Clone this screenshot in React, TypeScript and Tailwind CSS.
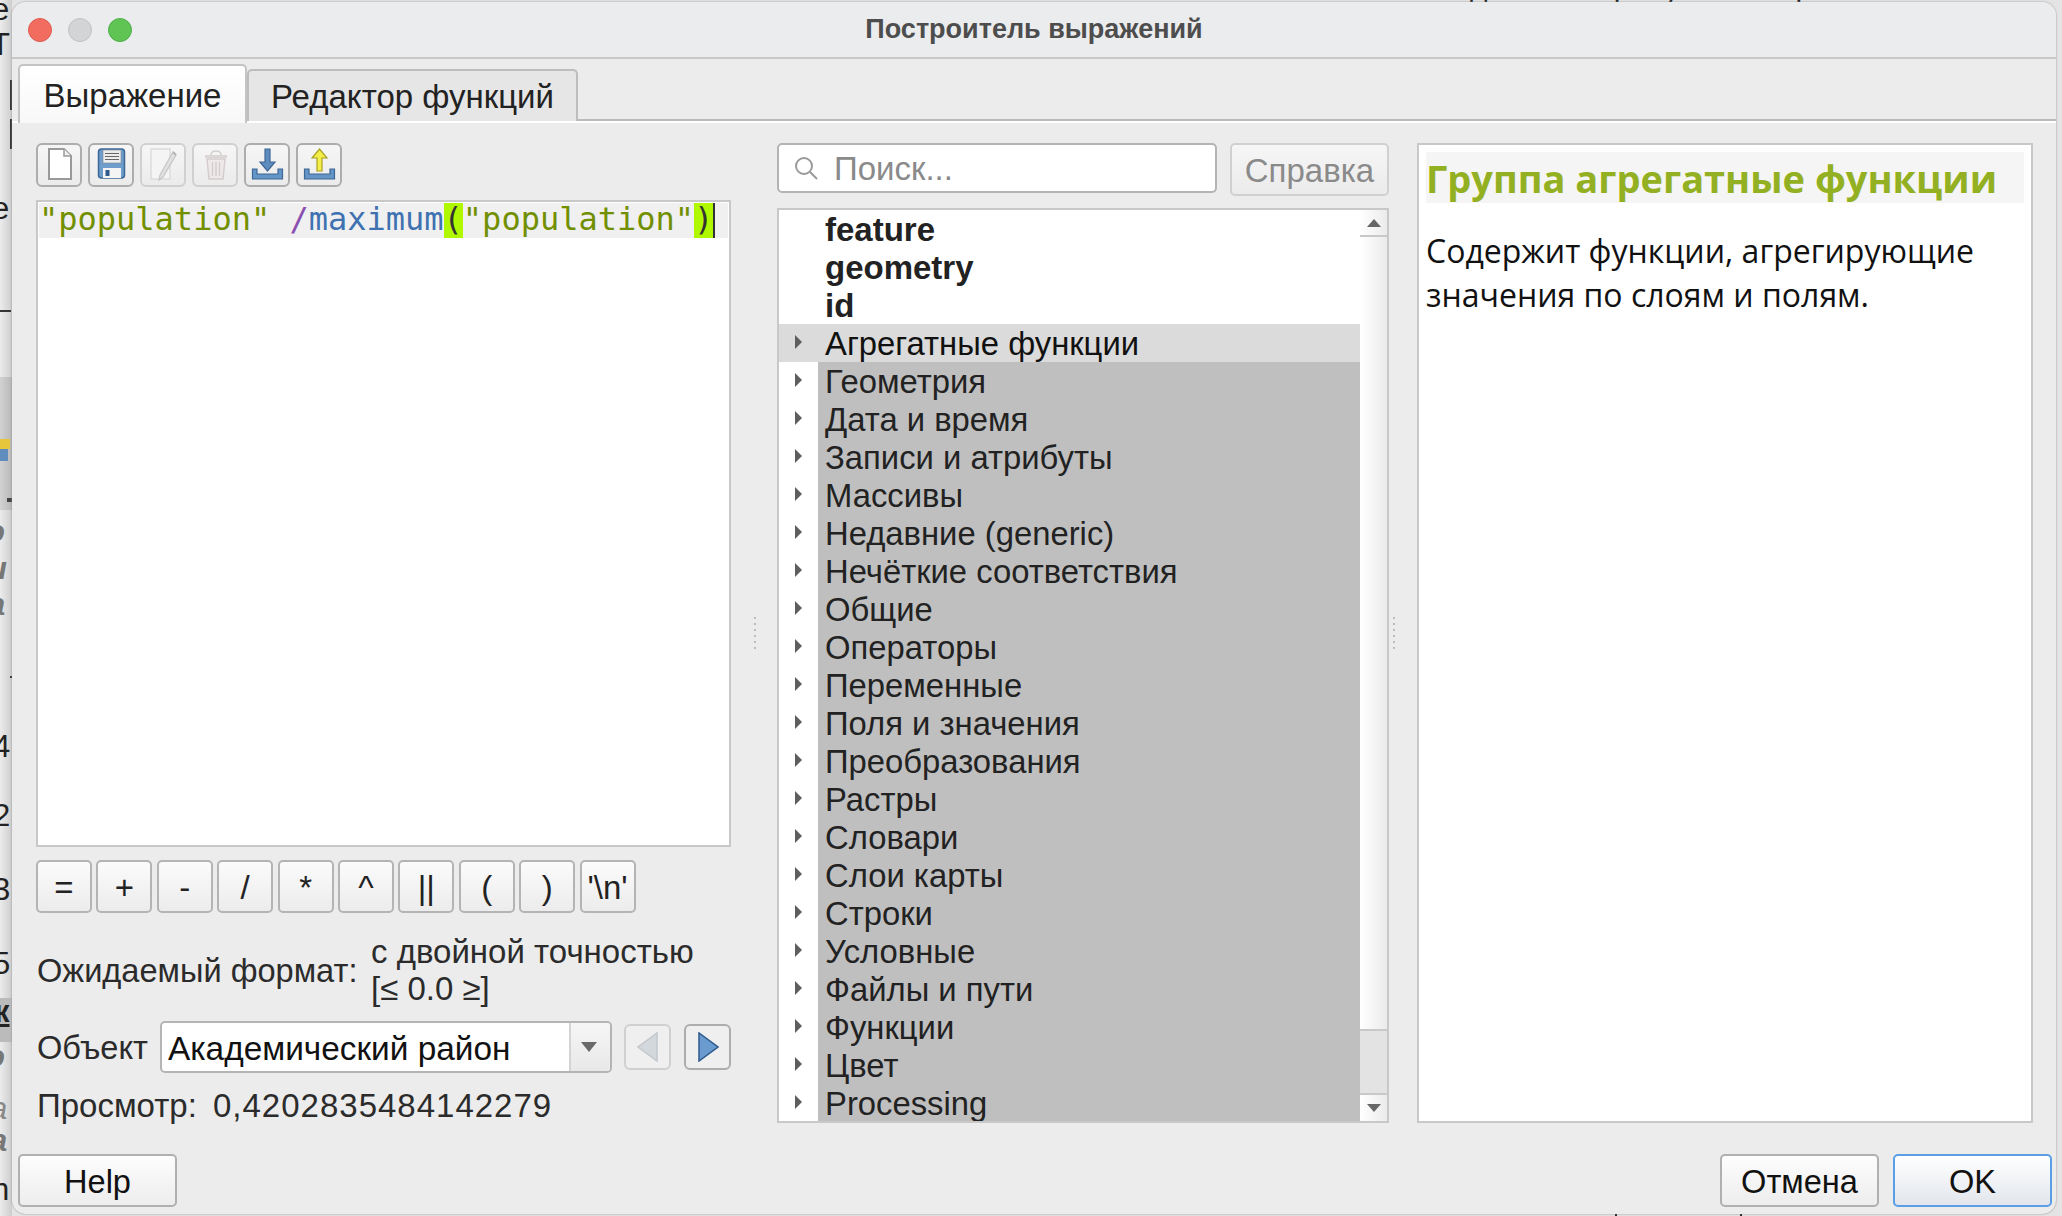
import React from "react";

const groups = ["Геометрия","Дата и время","Записи и атрибуты","Массивы","Недавние (generic)","Нечёткие соответствия","Общие","Операторы","Переменные","Поля и значения","Преобразования","Растры","Словари","Слои карты","Строки","Условные","Файлы и пути","Функции","Цвет","Processing"];

function Arrow() {
  return (
    <svg width="9" height="16" viewBox="0 0 9 16" className="ml-[15px] mt-[-3px]">
      <path d="M1 1 L8 8 L1 15 Z" fill="#5e5e5e" />
    </svg>
  );
}

function Tool({ children, disabled }: { children: React.ReactNode; disabled?: boolean }) {
  return (
    <div className={"flex h-[44px] w-[46px] items-center justify-center rounded-[6px] border-2 bg-linear-to-b from-[#f6f6f6] to-[#ebebeb] " + (disabled ? "border-[#d0d0d0]" : "border-[#adadad]")}>
      <svg width="42" height="40" viewBox="2 2 42 40">{children}</svg>
    </div>
  );
}

function CalcBtn({ t }: { t: string }) {
  return (
    <div className="flex h-[53px] w-[56px] items-center justify-center rounded-[5px] border-2 border-[#b4b4b4] bg-linear-to-b from-[#fbfbfb] to-[#ececec] pt-[2px] text-[33px] text-[#222]">
      {t}
    </div>
  );
}

function FootBtn({ t, primary }: { t: string; primary?: boolean }) {
  return (
    <div className={"flex h-[53px] w-[159px] items-center justify-center rounded-[5px] border-2 pt-[3px] text-[32.6px] text-[#111] bg-linear-to-b " + (primary ? "border-[#5a9fe6] from-white to-[#e2e6ec]" : "border-[#b0b0b0] from-[#fdfdfd] to-[#ededed]")}>
      {t}
    </div>
  );
}

export default function App() {
  return (
    <div className="relative flex h-[1216px] w-[2062px] overflow-hidden bg-[#e4e4e4] font-['Liberation_Sans',sans-serif]">
      {/* the window behind the dialog */}
      <div className="absolute left-0 top-0 h-[1216px] w-[12px] overflow-hidden bg-linear-to-r from-[#ececec] to-[#cdcdcd] text-[31px] leading-[36px] text-[#222]">
        <span className="absolute left-[-8px] top-[-8px]">е</span>
        <span className="absolute left-[-9px] top-[27px]">Т</span>
        <div className="absolute left-[10px] top-[80px] h-[30px] w-[3px] bg-[#333]" />
        <div className="absolute left-[10px] top-[119px] h-[30px] w-[3px] bg-[#333]" />
        <span className="absolute left-[-8px] top-[191px]">е</span>
        <div className="absolute left-0 top-[310px] h-[2px] w-[11px] bg-[#333]" />
        <div className="absolute left-0 top-[377px] h-[133px] w-[12px] bg-linear-to-r from-[#d2d2d2] to-[#b8b8b8]" />
        <div className="absolute left-0 top-[439px] h-[10px] w-[10px] bg-[#e8c63c]" />
        <div className="absolute left-0 top-[449px] h-[12px] w-[8px] bg-[#5f8dbd]" />
        <div className="absolute left-[7px] top-[498px] h-[4px] w-[5px] bg-[#444]" />
        <span className="absolute left-[-14px] top-[514px] font-bold italic text-[#777]">o</span>
        <span className="absolute left-[-12px] top-[551px] font-bold italic text-[#777]">и</span>
        <span className="absolute left-[-12px] top-[587px] font-bold italic text-[#777]">а</span>
        <div className="absolute left-[10px] top-[676px] h-[2px] w-[3px] bg-[#333]" />
        <span className="absolute left-[-7px] top-[729px]">4</span>
        <span className="absolute left-[-7px] top-[798px]">2</span>
        <span className="absolute left-[-7px] top-[872px]">3</span>
        <span className="absolute left-[-7px] top-[946px]">5</span>
        <div className="absolute left-0 top-[998px] h-[44px] w-[12px] bg-[#bbb]" />
        <span className="absolute left-[-6px] top-[994px] font-bold underline">к</span>
        <span className="absolute left-[-14px] top-[1039px] font-bold italic text-[#777]">o</span>
        <span className="absolute left-[-10px] top-[1091px] italic text-[#888]">а</span>
        <span className="absolute left-[-10px] top-[1123px] font-bold italic text-[#777]">а</span>
        <span className="absolute left-[-8px] top-[1172px]">n</span>
      </div>
      <div className="absolute left-[225px] top-[-25px] text-[30px] leading-[30px] text-[#222]">и иииии</div>
      <div className="absolute left-[1470px] top-[-25px] text-[30px] leading-[30px] text-[#222]">данные атрибутов и выражения слоя</div>
      <div className="absolute bottom-0 left-[1615px] h-[3px] w-[2px] bg-[#222]" />
      <div className="absolute bottom-0 left-[1740px] h-[3px] w-[2px] bg-[#222]" />

      {/* dialog */}
      <div className="z-10 ml-[12px] mt-[2px] flex h-[1212px] w-[2044px] flex-col overflow-hidden rounded-[14px] bg-[#ececec] shadow-[0_0_2px_#888]">
        <div className="relative flex h-[57px] shrink-0 items-center justify-center border-b-2 border-[#c8c8c8] bg-[#ebecee]">
          <div className="absolute left-[16px] top-[16px] flex gap-[16px]">
            <div className="h-[24px] w-[24px] rounded-full border border-[#dd5a50] bg-[#f26d60]" />
            <div className="h-[24px] w-[24px] rounded-full border border-[#c2c2c2] bg-[#d3d4d6]" />
            <div className="h-[24px] w-[24px] rounded-full border border-[#4fae48] bg-[#60c454]" />
          </div>
          <span className="text-[27px] font-bold text-[#4d4d4d]">Построитель выражений</span>
        </div>

        {/* tabs */}
        <div className="mt-[5px] flex h-[59px] shrink-0 items-end border-b-[2px] border-white pl-[6px]">
          <div className="mb-[-2px] flex h-[59px] w-[229px] items-center justify-center rounded-t-[5px] border-x-2 border-t-2 border-b-0 border-[#c4c4c4] bg-linear-to-b from-white to-[#f8f8f8] pt-[2px] text-[33px] text-[#222]">
            Выражение
          </div>
          <div className="flex h-[50px] flex-1 items-end border-b-[2px] border-[#bbbbbb]">
            <div className="mb-[-2px] flex h-[52px] w-[331px] items-center justify-center rounded-t-[5px] border-x-2 border-t-2 border-[#bdbdbd] bg-[#e6e6e6] pt-[2px] text-[33px] text-[#222]">
              Редактор функций
            </div>
          </div>
        </div>

        {/* body */}
        <div className="mt-[20px] flex h-[980px] shrink-0 pl-[24px]">
          {/* left column */}
          <div className="flex w-[695px] shrink-0 flex-col text-[32.6px] text-[#2b2b2b]">
            <div className="flex shrink-0 gap-[6px]">
              <Tool>
                <path d="M13 6 H28 L35 13 V36 H13 Z" fill="#fff" stroke="#9a9a9a" strokeWidth="2" />
                <path d="M28 6 V13 H35" fill="#eee" stroke="#9a9a9a" strokeWidth="1.5" />
              </Tool>
              <Tool>
                <rect x="10.5" y="6" width="26" height="29" rx="3" fill="#6e9ccb" stroke="#3f6796" strokeWidth="1.5" />
                <rect x="15" y="7" width="18" height="13" fill="#ececec" stroke="#7d8a99" strokeWidth="0.6" />
                <path d="M17 10.5 H31 M17 13.5 H31 M17 16.5 H31" stroke="#666" strokeWidth="1.2" />
                <rect x="15" y="25" width="18" height="10" fill="#f4f4f4" />
                <rect x="17.5" y="27" width="4" height="6" fill="#2f5a8c" />
              </Tool>
              <Tool disabled>
                <path d="M11 6 H30 V36 H11 Z" fill="#f4f4f4" stroke="#dcdcdc" strokeWidth="1.5" />
                <path d="M20 32 L19 37 L23 34 L36 12 L33 9 Z" fill="#e0e0e0" stroke="#c6c6c6" strokeWidth="1.2" />
                <path d="M33 9 L36 12" stroke="#b5b5b5" strokeWidth="2" />
              </Tool>
              <Tool disabled>
                <path d="M13 12 H35 V15 H13 Z" fill="#dcd5d5" />
                <path d="M19 12 Q19 8 24 8 Q29 8 29 12" fill="none" stroke="#d8d0d0" strokeWidth="1.5" />
                <path d="M15 16 H33 L31 36 H17 Z" fill="#efeaea" stroke="#d5cdcd" strokeWidth="1.5" />
                <path d="M20.5 19 V33 M24 19 V33 M27.5 19 V33" stroke="#d5cdcd" strokeWidth="1.5" />
              </Tool>
              <Tool>
                <path d="M21 6 H26 V19 H31 L23.5 28 L16 19 H21 Z" fill="#5d8cbe" stroke="#3f6796" strokeWidth="1.2" />
                <path d="M8.5 26 H13 V31 H34 V26 H38.5 V36 H8.5 Z" fill="#6495c7" stroke="#3f6796" strokeWidth="1.2" />
              </Tool>
              <Tool>
                <path d="M21 28 H26 V15 H31 L23.5 6 L16 15 H21 Z" fill="#f4ee4a" stroke="#a8a020" strokeWidth="1.2" />
                <path d="M8.5 26 H13 V31 H34 V26 H38.5 V36 H8.5 Z" fill="#6495c7" stroke="#3f6796" strokeWidth="1.2" />
              </Tool>
            </div>

            <div className="mt-[13px] h-[647px] shrink-0 border-2 border-[#c8c8c8] bg-white p-[1px]">
              <div className="flex h-[35px] items-center whitespace-pre bg-[#f0f0f0] pb-[2px] font-['DejaVu_Sans_Mono',monospace] text-[32px] leading-[33px] text-[#728f00]">
                <span>"population" </span>
                <span className="text-[#8a4fb0]">/</span>
                <span className="text-[#3f72b0]">maximum</span>
                <span className="mb-[-2px] self-stretch bg-[#b0f800] text-[#333]">(</span>
                <span>"population"</span>
                <span className="mb-[-2px] self-stretch border-r-2 border-[#333] bg-[#b0f800] text-[#333]">)</span>
              </div>
            </div>

            <div className="mt-[13px] flex shrink-0 gap-[4.4px]">
              {["=", "+", "-", "/", "*", "^", "||", "(", ")", "'\\n'"].map((t) => (
                <CalcBtn key={t} t={t} />
              ))}
            </div>

            <div className="mt-[22px] flex h-[74px] shrink-0 items-center pl-[1px]">
              <span className="w-[334px] shrink-0 mt-[-2px]">Ожидаемый формат:</span>
              <div className="mt-[-4px] text-[33px] leading-[37px]">
                с двойной точностью
                <br />
                [≤ 0.0 ≥]
              </div>
            </div>

            <div className="mt-[12px] flex h-[52px] shrink-0 items-center pl-[1px]">
              <span className="w-[123px] shrink-0 pt-[2px]">Объект</span>
              <div className="flex h-[52px] w-[452px] items-stretch overflow-hidden rounded-[5px] border-2 border-[#b4b4b4] bg-white">
                <div className="flex flex-1 items-center pl-[6px] pt-[5px] text-[33.4px] text-[#111]">Академический район</div>
                <div className="flex w-[41px] items-center justify-center border-l-2 border-[#d4d4d4] bg-linear-to-b from-[#f6f6f6] to-[#e8e8e8] pr-[3px]">
                  <svg width="16" height="10" viewBox="0 0 16 10"><path d="M0 0 H16 L8 10 Z" fill="#6a6a6a" /></svg>
                </div>
              </div>
              <div className="ml-[12px] flex h-[46px] w-[47px] items-center justify-center rounded-[6px] border-2 border-[#d0d0d0] bg-[#efefef]">
                <svg width="22" height="30" viewBox="0 0 22 30"><path d="M20 1 V29 L1 15 Z" fill="#d3d8dc" stroke="#c4c8cc" strokeWidth="1.5" /></svg>
              </div>
              <div className="ml-[13px] flex h-[46px] w-[47px] items-center justify-center rounded-[6px] border-2 border-[#adadad] bg-[#efefef]">
                <svg width="22" height="30" viewBox="0 0 22 30"><path d="M2 1 V29 L21 15 Z" fill="#6a9bce" stroke="#2f5a8c" strokeWidth="1.5" /></svg>
              </div>
            </div>

            <div className="mt-[14px] flex h-[38px] shrink-0 items-center pl-[1px]">
              <span className="w-[176px] shrink-0 text-[33px]">Просмотр:</span>
              <span className="text-[33px] tracking-[1px]">0,4202835484142279</span>
            </div>
          </div>

          {/* splitter */}
          <div className="flex w-[46px] shrink-0 flex-col items-center justify-center gap-[4px] pl-[2px]">
            {[0, 1, 2, 3, 4, 5].map((i) => <div key={i} className="h-[2px] w-[2px] bg-[#bdbdbd]" />)}
          </div>

          {/* middle column */}
          <div className="flex w-[612px] shrink-0 flex-col">
            <div className="flex h-[52px] gap-[13px]">
              <div className="flex h-[50px] flex-1 items-center rounded-[5px] border-2 border-[#b4b4b4] bg-white pl-[15px] text-[33px] text-[#8a8a8a]">
                <svg width="24" height="24" viewBox="0 0 24 24" fill="none" stroke="#9a9a9a" strokeWidth="2"><circle cx="10" cy="10" r="8" /><path d="M16 16 L23 23" /></svg>
                <span className="ml-[16px] pt-[2px]">Поиск...</span>
              </div>
              <div className="flex h-[53px] w-[159px] items-center justify-center rounded-[5px] border-2 border-[#d0d0d0] bg-linear-to-b from-[#f6f6f6] to-[#ebebeb] pt-[2px] text-[33px] text-[#8a8a8a]">
                Справка
              </div>
            </div>
            <div className="mt-[13px] flex h-[915px] shrink-0 overflow-hidden border-2 border-[#c8c8c8] bg-white text-[32.8px] text-[#222]">
              <div className="flex-1 overflow-hidden">
                {["feature", "geometry", "id"].map((t) => (
                  <div key={t} className="flex h-[38px] items-center pl-[46px] pt-[1px] text-[33px] font-bold leading-none">{t}</div>
                ))}
                <div className="flex h-[38px] items-center bg-[#dbdbdb] text-[#111]">
                  <div className="w-[39px]"><Arrow /></div>
                  <span className="pl-[7px] pt-[1px]">Агрегатные функции</span>
                </div>
                {groups.map((t) => (
                  <div key={t} className="flex h-[38px] items-center">
                    <div className="w-[39px]"><Arrow /></div>
                    <div className="flex h-full flex-1 items-center bg-[#bfbfbf] pl-[7px] pt-[1px]">{t}</div>
                  </div>
                ))}
              </div>
              <div className="flex w-[27px] shrink-0 flex-col bg-linear-to-r from-white to-[#ebebeb]">
                <div className="flex h-[27px] shrink-0 items-center justify-center border-b-2 border-[#c8c8c8]">
                  <svg width="14" height="8" viewBox="0 0 14 8"><path d="M0 8 H14 L7 0 Z" fill="#666" /></svg>
                </div>
                <div className="flex-1" />
                <div className="h-[66px] shrink-0 border-y-2 border-[#c8c8c8] bg-[#e3e3e3]" />
                <div className="flex h-[26px] shrink-0 items-center justify-center">
                  <svg width="14" height="8" viewBox="0 0 14 8"><path d="M0 0 H14 L7 8 Z" fill="#666" /></svg>
                </div>
              </div>
            </div>
          </div>

          {/* splitter */}
          <div className="flex w-[28px] shrink-0 flex-col items-center justify-center gap-[4px] pr-[18px]">
            {[0, 1, 2, 3, 4, 5].map((i) => <div key={i} className="h-[2px] w-[2px] bg-[#bdbdbd]" />)}
          </div>

          {/* right column */}
          <div className="h-[980px] w-[616px] shrink-0 border-2 border-[#c8c8c8] bg-white px-[7px] pt-[7px] font-['Open_Sans',sans-serif]">
            <div className="flex h-[51px] items-center bg-[#f5f5f5] pt-[2px] text-[38px] font-bold text-[#93b023]">
              Группа агрегатные функции
            </div>
            <div className="mt-[26px] text-[32px] leading-[44px] text-[#111]">
              Содержит функции, агрегирующие
              <br />
              значения по слоям и полям.
            </div>
          </div>
        </div>

        {/* footer */}
        <div className="mt-[31px] flex items-start pl-[6px] pr-[4px]">
          <FootBtn t="Help" />
          <div className="flex-1" />
          <FootBtn t="Отмена" />
          <div className="ml-[14px]"><FootBtn t="OK" primary /></div>
        </div>
      </div>
    </div>
  );
}
